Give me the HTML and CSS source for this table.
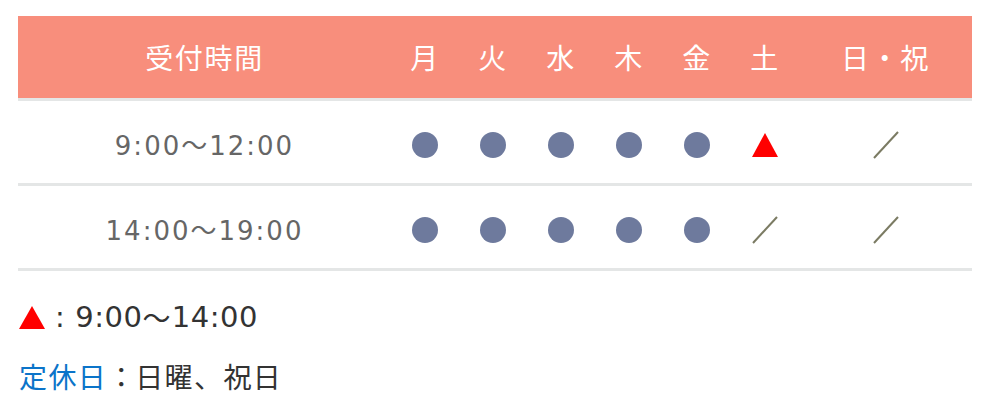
FILE: index.html
```html
<!DOCTYPE html>
<html lang="ja">
<head>
<meta charset="utf-8">
<link rel="stylesheet" href="styles.css">
</head>
<body>
<div class="wrap">
  <table class="hours">
    <colgroup>
      <col class="c-time"><col class="c-day"><col class="c-day"><col class="c-day"><col class="c-day"><col class="c-day"><col class="c-day"><col class="c-hol">
    </colgroup>
    <thead>
      <tr>
        <th>受付時間</th><th>月</th><th>火</th><th>水</th><th>木</th><th>金</th><th>土</th><th>日・祝</th>
      </tr>
    </thead>
    <tbody>
      <tr>
        <td class="time"><span class="num">9:00</span>〜<span class="num">12:00</span></td>
        <td><span class="dot"></span></td>
        <td><span class="dot"></span></td>
        <td><span class="dot"></span></td>
        <td><span class="dot"></span></td>
        <td><span class="dot"></span></td>
        <td><span class="tri"></span></td>
        <td><svg class="slash" width="26" height="28" viewBox="0 0 26 28"><line x1="1" y1="27" x2="25" y2="1"/></svg></td>
      </tr>
      <tr>
        <td class="time"><span class="num">14:00</span>〜<span class="num">19:00</span></td>
        <td><span class="dot"></span></td>
        <td><span class="dot"></span></td>
        <td><span class="dot"></span></td>
        <td><span class="dot"></span></td>
        <td><span class="dot"></span></td>
        <td><svg class="slash" width="26" height="28" viewBox="0 0 26 28"><line x1="1" y1="27" x2="25" y2="1"/></svg></td>
        <td><svg class="slash" width="26" height="28" viewBox="0 0 26 28"><line x1="1" y1="27" x2="25" y2="1"/></svg></td>
      </tr>
    </tbody>
  </table>
  <div class="legend">
    <p class="line"><span class="tri small"></span><span class="sep num">:</span><span class="num">9:00</span>〜<span class="num">14:00</span></p>
    <p class="line"><span class="closed">定休日</span><span class="sep2">：</span>日曜、祝日</p>
  </div>
</div>
</body>
</html>
```

FILE: styles.css
```css
html, body {
  margin: 0;
  padding: 0;
  background: #fff;
}
body {
  font-family: "Noto Sans CJK JP", "Noto Sans", sans-serif;
}
.num {
  font-family: "DejaVu Sans", "Noto Sans CJK JP", sans-serif;
}
.wrap {
  padding: 16px 20px 0 18px;
}
.hours {
  width: 954px;
  border-collapse: collapse;
  table-layout: fixed;
}
.c-time { width: 373px; }
.c-day { width: 68px; }
.c-hol { width: 173px; }
.hours th {
  background: #f88e7c;
  color: #fff;
  font-weight: 400;
  font-size: 28px;
  letter-spacing: 0.06em;
  height: 82px;
  padding: 0;
  border-bottom: 3px solid #e4e6e6;
  text-align: center;
  vertical-align: middle;
}
.hours td {
  height: 76px;
  padding: 6px 0 0;
  border-bottom: 3px solid #e4e6e6;
  text-align: center;
  vertical-align: middle;
  line-height: 1;
}
.hours td.time {
  color: #666;
  font-size: 26px;
  letter-spacing: 2px;
}
.dot {
  display: inline-block;
  width: 26px;
  height: 26px;
  border-radius: 50%;
  background: #6e7a9d;
  vertical-align: middle;
}
.tri {
  display: inline-block;
  width: 0;
  height: 0;
  border-left: 13.5px solid transparent;
  border-right: 13.5px solid transparent;
  border-bottom: 24px solid #ff0000;
  vertical-align: middle;
}
.slash {
  display: inline-block;
  vertical-align: middle;
}
.slash line {
  stroke: #7b7b63;
  stroke-width: 2;
}
.legend {
  padding-top: 26px;
  padding-left: 1px;
}
.line {
  margin: 0 0 19px;
  height: 40px;
  display: flex;
  align-items: center;
  color: #333;
  font-size: 28px;
  letter-spacing: 0.05em;
}
.legend .line .num {
  font-size: 29px;
  letter-spacing: 0.5px;
}
.tri.small {
  border-bottom-width: 23px;
}
.sep {
  margin: 0 10px 0 10px;
}
.closed {
  color: #0b74c9;
}
.sep2 {
  margin: 0;
  letter-spacing: 0;
}
```
